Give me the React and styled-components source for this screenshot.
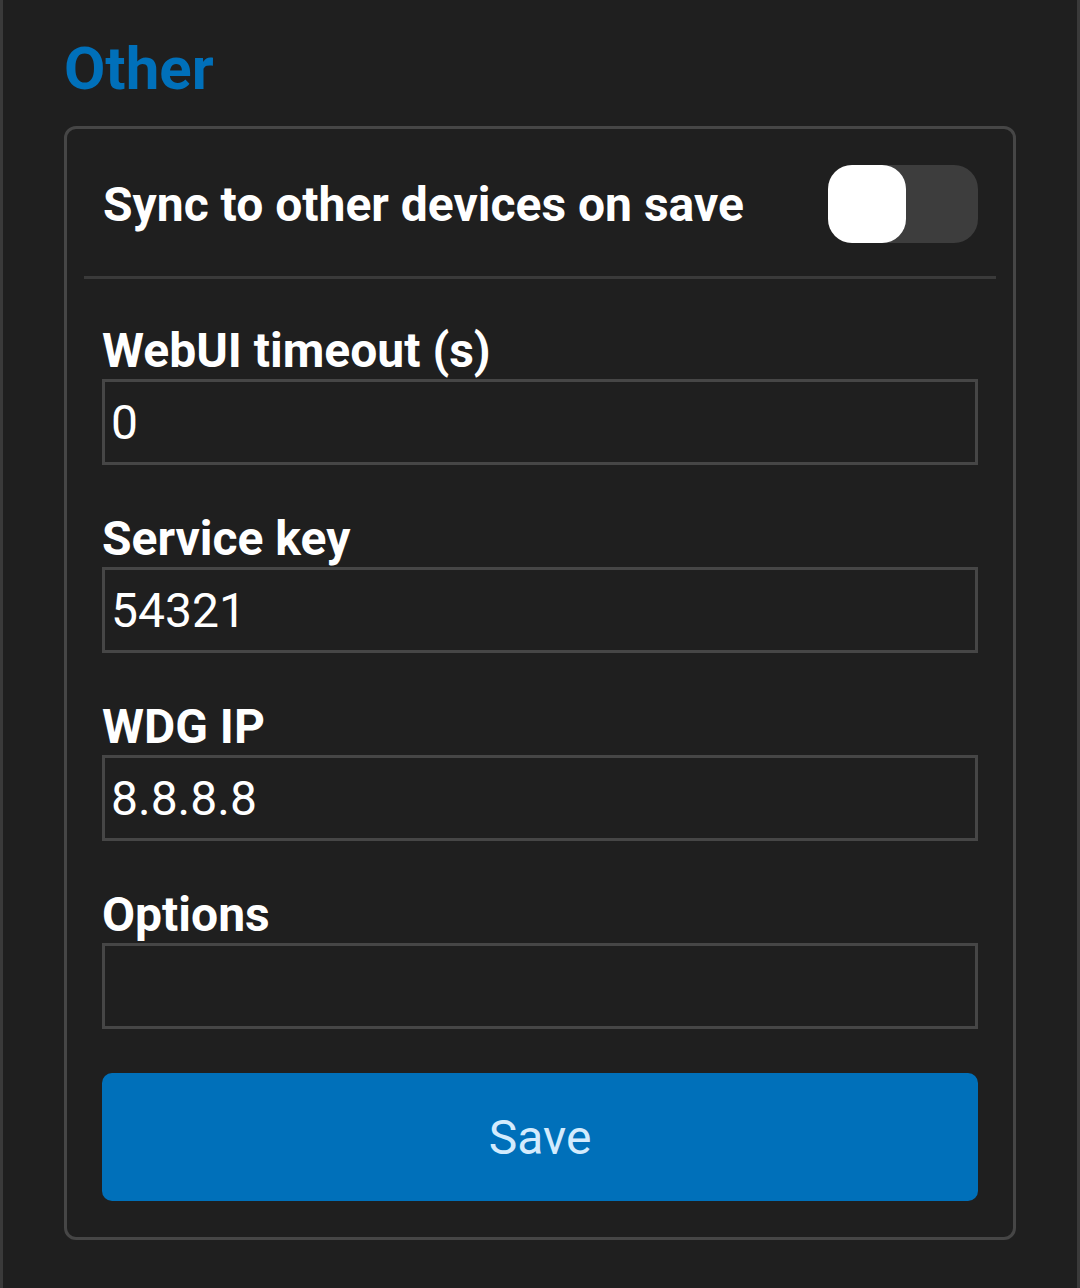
import React, { useState } from 'react';
import styled, { createGlobalStyle } from 'styled-components';

const GlobalStyle = createGlobalStyle`
  html, body {
    margin: 0;
    padding: 0;
    background: #1f1f1f;
  }
  * {
    box-sizing: border-box;
  }
`;

const fields = [
  { label: 'WebUI timeout (s)', value: '0' },
  { label: 'Service key', value: '54321' },
  { label: 'WDG IP', value: '8.8.8.8' },
  { label: 'Options', value: '' },
];

function App() {
  const [sync, setSync] = useState(false);

  return (
    <Page>
      <GlobalStyle />
      <Title>Other</Title>
      <Card>
        <SyncRow>
          <SyncText>Sync to other devices on save</SyncText>
          <Toggle $on={sync} onClick={() => setSync(!sync)}>
            <Knob $on={sync} />
          </Toggle>
        </SyncRow>
        <Fields>
          {fields.map((f) => (
            <Field key={f.label}>
              <Label>{f.label}</Label>
              <Input defaultValue={f.value} />
            </Field>
          ))}
          <SaveButton>Save</SaveButton>
        </Fields>
      </Card>
    </Page>
  );
}

const Page = styled.div`
  min-height: 1288px;
  padding: 33px 61px 0;
  border-left: 3px solid #3a3a3a;
  border-right: 3px solid #3a3a3a;
  font-family: Roboto, 'Noto Sans', sans-serif;
  color: #fff;
`;

const Title = styled.h2`
  margin: 0 0 22px;
  font-size: 60px;
  font-weight: 700;
  line-height: normal;
  color: #0070ba;
`;

const Card = styled.div`
  border: 3px solid #464646;
  border-radius: 12px;
  padding-bottom: 36px;
`;

const SyncRow = styled.div`
  display: flex;
  align-items: center;
  justify-content: space-between;
  margin: 0 17px;
  padding: 36px 18px 33px 19px;
  border-bottom: 3px solid #3a3a3a;
`;

const SyncText = styled.span`
  font-size: 48px;
  font-weight: 700;
`;

const Toggle = styled.div`
  display: flex;
  justify-content: ${(p) => (p.$on ? 'flex-end' : 'flex-start')};
  width: 150px;
  height: 78px;
  border-radius: 24px;
  background: ${(p) => (p.$on ? '#0070ba' : '#3d3d3d')};
  cursor: pointer;
`;

const Knob = styled.div`
  width: 78px;
  height: 78px;
  border-radius: 24px;
  background: #fff;
`;

const Fields = styled.div`
  display: flex;
  flex-direction: column;
  padding: 44px 35px 0;
`;

const Field = styled.div`
  display: flex;
  flex-direction: column;
  margin-bottom: 46px;
`;

const Label = styled.label`
  font-size: 48px;
  font-weight: 700;
  line-height: 56px;
`;

const Input = styled.input`
  width: 100%;
  height: 86px;
  padding: 0 6px;
  border: 3px solid #464646;
  border-radius: 0;
  background: #1f1f1f;
  color: #fff;
  font-family: Roboto, 'Noto Sans', sans-serif;
  font-size: 48px;
  outline: none;
`;

const SaveButton = styled.button`
  height: 128px;
  margin-top: -2px;
  border: none;
  border-radius: 10px;
  background: #0070ba;
  color: #d3ebfd;
  font-family: Roboto, 'Noto Sans', sans-serif;
  font-size: 48px;
  cursor: pointer;
`;

export default App;
